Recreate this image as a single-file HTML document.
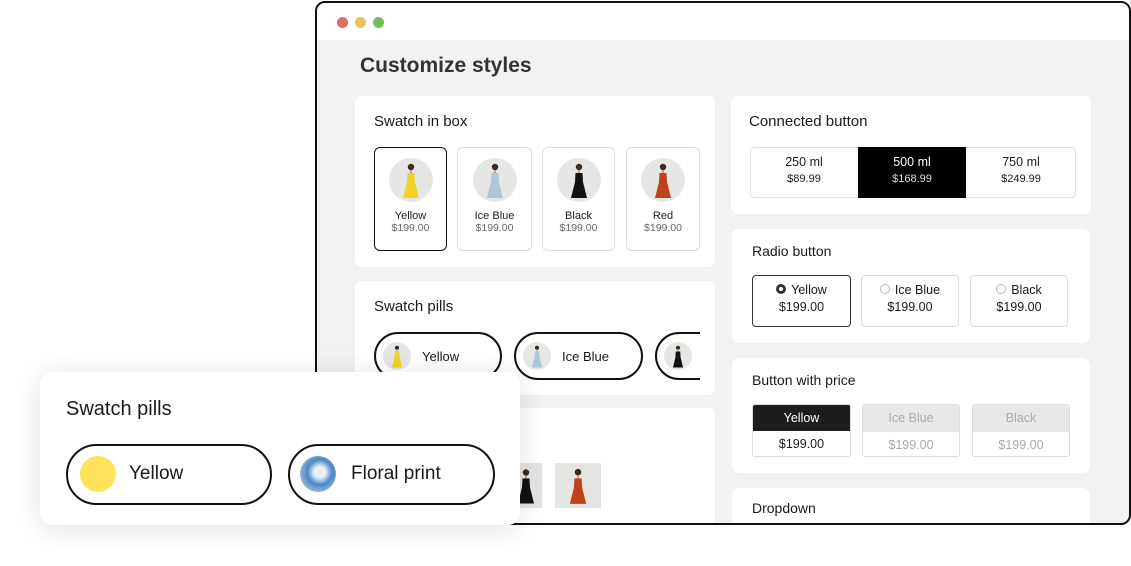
<!DOCTYPE html>
<html><head><style>
*{margin:0;padding:0;box-sizing:border-box}
body{width:1131px;height:566px;background:#fff;position:relative;overflow:hidden;font-family:"Liberation Sans",sans-serif;color:#1a1a1a}
.abs{position:absolute}
.win{left:315px;top:1px;width:816px;height:524px;border:2.5px solid #111;border-radius:10px;background:#f1f2f3;overflow:hidden}
.bar{left:0;top:0;width:100%;height:37px;background:#fff}
.dot{width:11px;height:11px;border-radius:50%;top:14px}
.card{background:#fff;border-radius:7px}
.ttl{font-size:15px;color:#1a1a1a}
.box{border:1.5px solid #ddd;border-radius:6px;background:#fff;text-align:center}
.av{border-radius:50%;background:#e6e6e4;overflow:hidden}
.nm{font-size:11px;color:#222}
.pr{font-size:10.5px;color:#666}
.pill{border:2px solid #111;border-radius:30px;background:#fff}
</style></head><body>
<svg width="0" height="0" style="position:absolute"><defs>
<g id="fig"><circle cx="22" cy="9" r="3.2" fill="#3a2a20"/><rect x="21" y="12" width="2" height="3" fill="#c9a07f"/><path d="M18.5 15 L25.5 15 L26 24 L30 40 L14 40 L18 24 Z"/></g>
</defs></svg>
<div class="abs win">
 <div class="abs bar"></div>
 <div class="abs dot" style="left:20px;background:#e66a62"></div>
 <div class="abs dot" style="left:38px;background:#eec157"></div>
 <div class="abs dot" style="left:56px;background:#6cc25a"></div>
 <div class="abs" style="left:43px;top:51px;font-size:21px;font-weight:bold;color:#333">Customize styles</div>
 <!-- card1 -->
 <div class="abs card" style="left:38px;top:93px;width:360px;height:171px"></div>
 <div class="abs ttl" style="left:57px;top:110px">Swatch in box</div>
 <div class="abs box" style="left:57px;top:144px;width:73px;height:104px;border:1.8px solid #111"><div class="av" style="width:44px;height:44px;margin:10px auto 0"><svg width="44" height="44"><use href="#fig" fill="#f2d22a"/></svg></div><div class="nm" style="margin-top:8px">Yellow</div><div class="pr">$199.00</div></div>
 <div class="abs box" style="left:140px;top:144px;width:75px;height:104px"><div class="av" style="width:44px;height:44px;margin:10px auto 0"><svg width="44" height="44"><use href="#fig" fill="#a9c8db"/></svg></div><div class="nm" style="margin-top:8px">Ice Blue</div><div class="pr">$199.00</div></div>
 <div class="abs box" style="left:225px;top:144px;width:73px;height:104px"><div class="av" style="width:44px;height:44px;margin:10px auto 0"><svg width="44" height="44"><use href="#fig" fill="#111"/></svg></div><div class="nm" style="margin-top:8px">Black</div><div class="pr">$199.00</div></div>
 <div class="abs box" style="left:309px;top:144px;width:74px;height:104px"><div class="av" style="width:44px;height:44px;margin:10px auto 0"><svg width="44" height="44"><use href="#fig" fill="#c0421c"/></svg></div><div class="nm" style="margin-top:8px">Red</div><div class="pr">$199.00</div></div>
 <!-- card2 -->
 <div class="abs card" style="left:38px;top:278px;width:360px;height:114px;overflow:hidden">
  <div class="abs ttl" style="left:19px;top:17px">Swatch pills</div>
  <div class="abs pill" style="left:19px;top:51px;width:128px;height:48px"><div class="abs av" style="left:7px;top:8px;width:28px;height:28px"><svg width="28" height="28" viewBox="8 0 28 44"><use href="#fig" fill="#f2d22a"/></svg></div><div class="abs" style="left:46px;top:15px;font-size:13px">Yellow</div></div>
  <div class="abs pill" style="left:159px;top:51px;width:129px;height:48px"><div class="abs av" style="left:7px;top:8px;width:28px;height:28px"><svg width="28" height="28" viewBox="8 0 28 44"><use href="#fig" fill="#a9c8db"/></svg></div><div class="abs" style="left:46px;top:15px;font-size:13px">Ice Blue</div></div>
  <div class="abs" style="left:300px;top:0;width:45px;height:114px;overflow:hidden"><div class="abs pill" style="left:0;top:51px;width:120px;height:48px"><div class="abs av" style="left:7px;top:8px;width:28px;height:28px"><svg width="28" height="28" viewBox="8 0 28 44"><use href="#fig" fill="#111"/></svg></div></div></div>
 </div>
 <!-- card3 -->
 <div class="abs card" style="left:38px;top:405px;width:360px;height:130px"></div>
 <div class="abs" style="left:193px;top:460px;width:32px;height:45px;background:#e4e4e2"><svg width="32" height="45" viewBox="6 0 32 44"><use href="#fig" fill="#111"/></svg></div>
 <div class="abs" style="left:238px;top:460px;width:46px;height:45px;background:#e4e4e2"><svg width="46" height="45" viewBox="0 0 44 44"><use href="#fig" fill="#c0421c"/></svg></div>
 <!-- right column -->
 <div class="abs card" style="left:414px;top:93px;width:360px;height:118px"></div>
 <div class="abs ttl" style="left:432px;top:110px">Connected button</div>
 <div class="abs" style="left:433px;top:144px;width:326px;height:51px;border:1px solid #e2e2e2;border-radius:4px"></div>
 <div class="abs" style="left:433px;top:152px;width:108px;text-align:center;font-size:12.5px">250 ml<div style="font-size:11px;margin-top:4px">$89.99</div></div>
 <div class="abs" style="left:541px;top:144px;width:108px;height:51px;background:#000;color:#fff;text-align:center;font-size:12.5px;padding-top:8px">500 ml<div style="font-size:11px;margin-top:4px;color:#ddd">$168.99</div></div>
 <div class="abs" style="left:649px;top:152px;width:110px;text-align:center;font-size:12.5px">750 ml<div style="font-size:11px;margin-top:4px">$249.99</div></div>
 <div class="abs card" style="left:415px;top:226px;width:358px;height:114px"></div>
 <div class="abs ttl" style="left:435px;top:240px;font-size:14px">Radio button</div>
 <div class="abs box" style="left:435px;top:272px;width:99px;height:52px;border:1.5px solid #333;border-radius:4px;font-size:12.5px;padding-top:7px"><span style="display:inline-block;width:10px;height:10px;border:3px solid #333;border-radius:50%;margin-right:5px"></span>Yellow<div style="margin-top:3px">$199.00</div></div>
 <div class="abs box" style="left:544px;top:272px;width:98px;height:52px;border-radius:4px;font-size:12.5px;padding-top:7px"><span style="display:inline-block;width:10px;height:10px;border:1px solid #bbb;border-radius:50%;margin-right:5px"></span>Ice Blue<div style="margin-top:3px">$199.00</div></div>
 <div class="abs box" style="left:653px;top:272px;width:98px;height:52px;border-radius:4px;font-size:12.5px;padding-top:7px"><span style="display:inline-block;width:10px;height:10px;border:1px solid #bbb;border-radius:50%;margin-right:5px"></span>Black<div style="margin-top:3px">$199.00</div></div>
 <div class="abs card" style="left:415px;top:355px;width:358px;height:115px"></div>
 <div class="abs ttl" style="left:435px;top:369px;font-size:14px">Button with price</div>
 <div class="abs" style="left:435px;top:401px;width:99px;height:53px;border:1px solid #ddd;border-radius:3px;overflow:hidden;text-align:center;font-size:12.5px"><div style="background:#1d1d1d;color:#fff;height:26px;line-height:26px">Yellow</div><div style="line-height:26px">$199.00</div></div>
 <div class="abs" style="left:545px;top:401px;width:98px;height:53px;border:1px solid #ddd;border-radius:3px;overflow:hidden;text-align:center;font-size:12.5px;color:#aaa"><div style="background:#e8e8e8;height:27px;line-height:26px">Ice Blue</div><div style="line-height:26px">$199.00</div></div>
 <div class="abs" style="left:655px;top:401px;width:98px;height:53px;border:1px solid #ddd;border-radius:3px;overflow:hidden;text-align:center;font-size:12.5px;color:#aaa"><div style="background:#e8e8e8;height:27px;line-height:26px">Black</div><div style="line-height:26px">$199.00</div></div>
 <div class="abs card" style="left:415px;top:485px;width:358px;height:60px"></div>
 <div class="abs ttl" style="left:435px;top:497px;font-size:14px">Dropdown</div>
</div>
<!-- overlay -->
<div class="abs card" style="left:40px;top:372px;width:480px;height:153px;border-radius:12px;box-shadow:0 4px 30px rgba(0,0,0,.12)"></div>
<div class="abs" style="left:66px;top:398px;font-size:20px">Swatch pills</div>
<div class="abs pill" style="left:66px;top:444px;width:206px;height:61px;border-width:2.5px;border-radius:32px"><div class="abs" style="left:12px;top:10px;width:36px;height:36px;border-radius:50%;background:#fde45c"></div><div class="abs" style="left:61px;top:17px;font-size:19px">Yellow</div></div>
<div class="abs pill" style="left:288px;top:444px;width:207px;height:61px;border-width:2.5px;border-radius:32px"><div class="abs" style="left:10px;top:10px;width:36px;height:36px;border-radius:50%;background:radial-gradient(circle at 55% 45%,#e8eef2 20%,#4a86c8 45%,#8fb3d6 70%,#d8dcd6 90%)"></div><div class="abs" style="left:61px;top:17px;font-size:19px">Floral print</div></div>
</body></html>
